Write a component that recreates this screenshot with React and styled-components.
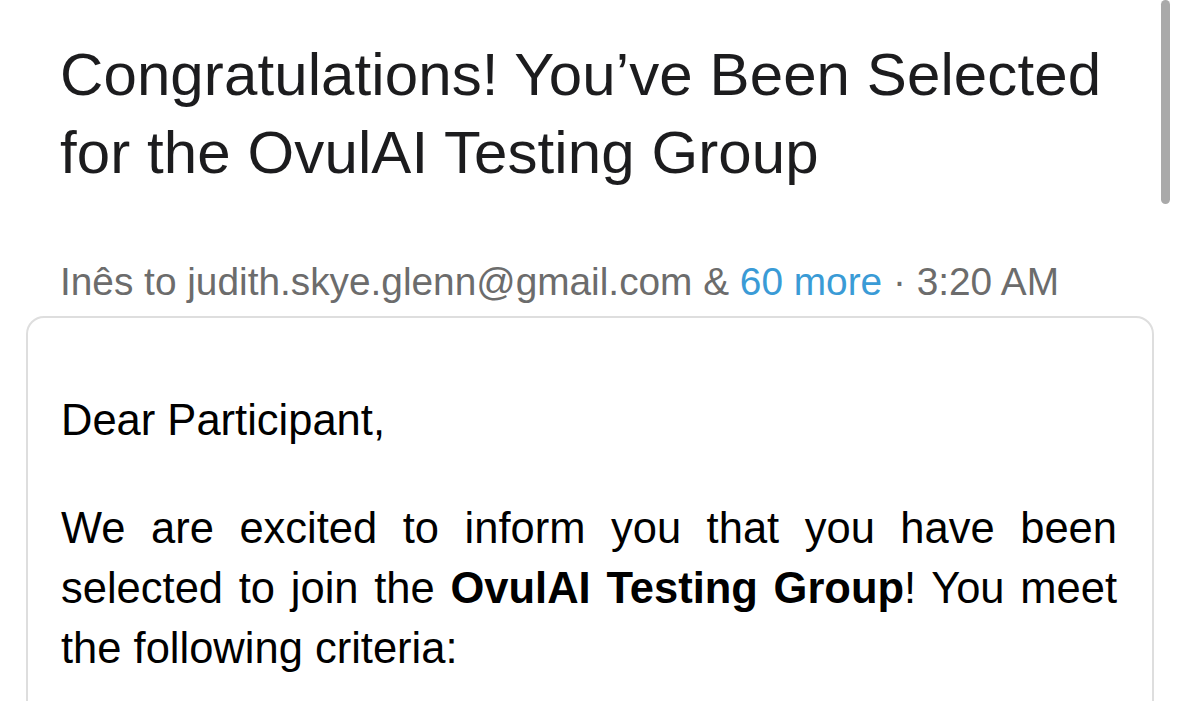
import React from "react";
import styled, { createGlobalStyle } from "styled-components";

const Global = createGlobalStyle`
  html, body { margin: 0; padding: 0; background: #ffffff; }
  body { font-family: "Liberation Sans", Arial, sans-serif; overflow: hidden; }
`;

const Page = styled.div`
  position: relative;
  width: 1179px;
  height: 701px;
  overflow: hidden;
  background: #fff;
  padding: 36px 0 0 26px;
  box-sizing: border-box;
`;

const Title = styled.h1`
  margin: 0 0 0 34px;
  font-size: 60px;
  line-height: 78px;
  font-weight: 400;
  color: #1c1c1e;
  letter-spacing: 0.1px;
`;

const Meta = styled.div`
  margin: 68px 0 0 34px;
  font-size: 38.8px;
  line-height: 44px;
  color: #6c6c6c;
  white-space: nowrap;
`;

const More = styled.span`
  color: #3a9bd6;
`;

const Card = styled.div`
  margin-top: 12px;
  width: 1128px;
  height: 600px;
  box-sizing: border-box;
  border: 2px solid #dedede;
  border-radius: 18px;
  padding: 72px 35px 0 33px;
`;

const Para = styled.p`
  margin: 0 0 48px 0;
  font-size: 43.5px;
  line-height: 60px;
  color: #000;
  text-align: justify;
`;

const Strong = styled.b`
  font-weight: 700;
`;

const Scrollbar = styled.div`
  position: absolute;
  top: 0;
  right: 9px;
  width: 9px;
  height: 204px;
  border-radius: 5px;
  background: #a9a9a9;
`;

export default function App() {
  return (
    <>
      <Global />
      <Page>
        <Title>
          Congratulations! You’ve Been Selected
          <br />
          for the OvulAI Testing Group
        </Title>
        <Meta>
          Inês to judith.skye.glenn@gmail.com &amp; <More>60 more</More> · 3:20 AM
        </Meta>
        <Card>
          <Para>Dear Participant,</Para>
          <Para>
            We are excited to inform you that you have been selected to join
            the <Strong>OvulAI Testing Group</Strong>! You meet the following
            criteria:
          </Para>
        </Card>
        <Scrollbar />
      </Page>
    </>
  );
}
